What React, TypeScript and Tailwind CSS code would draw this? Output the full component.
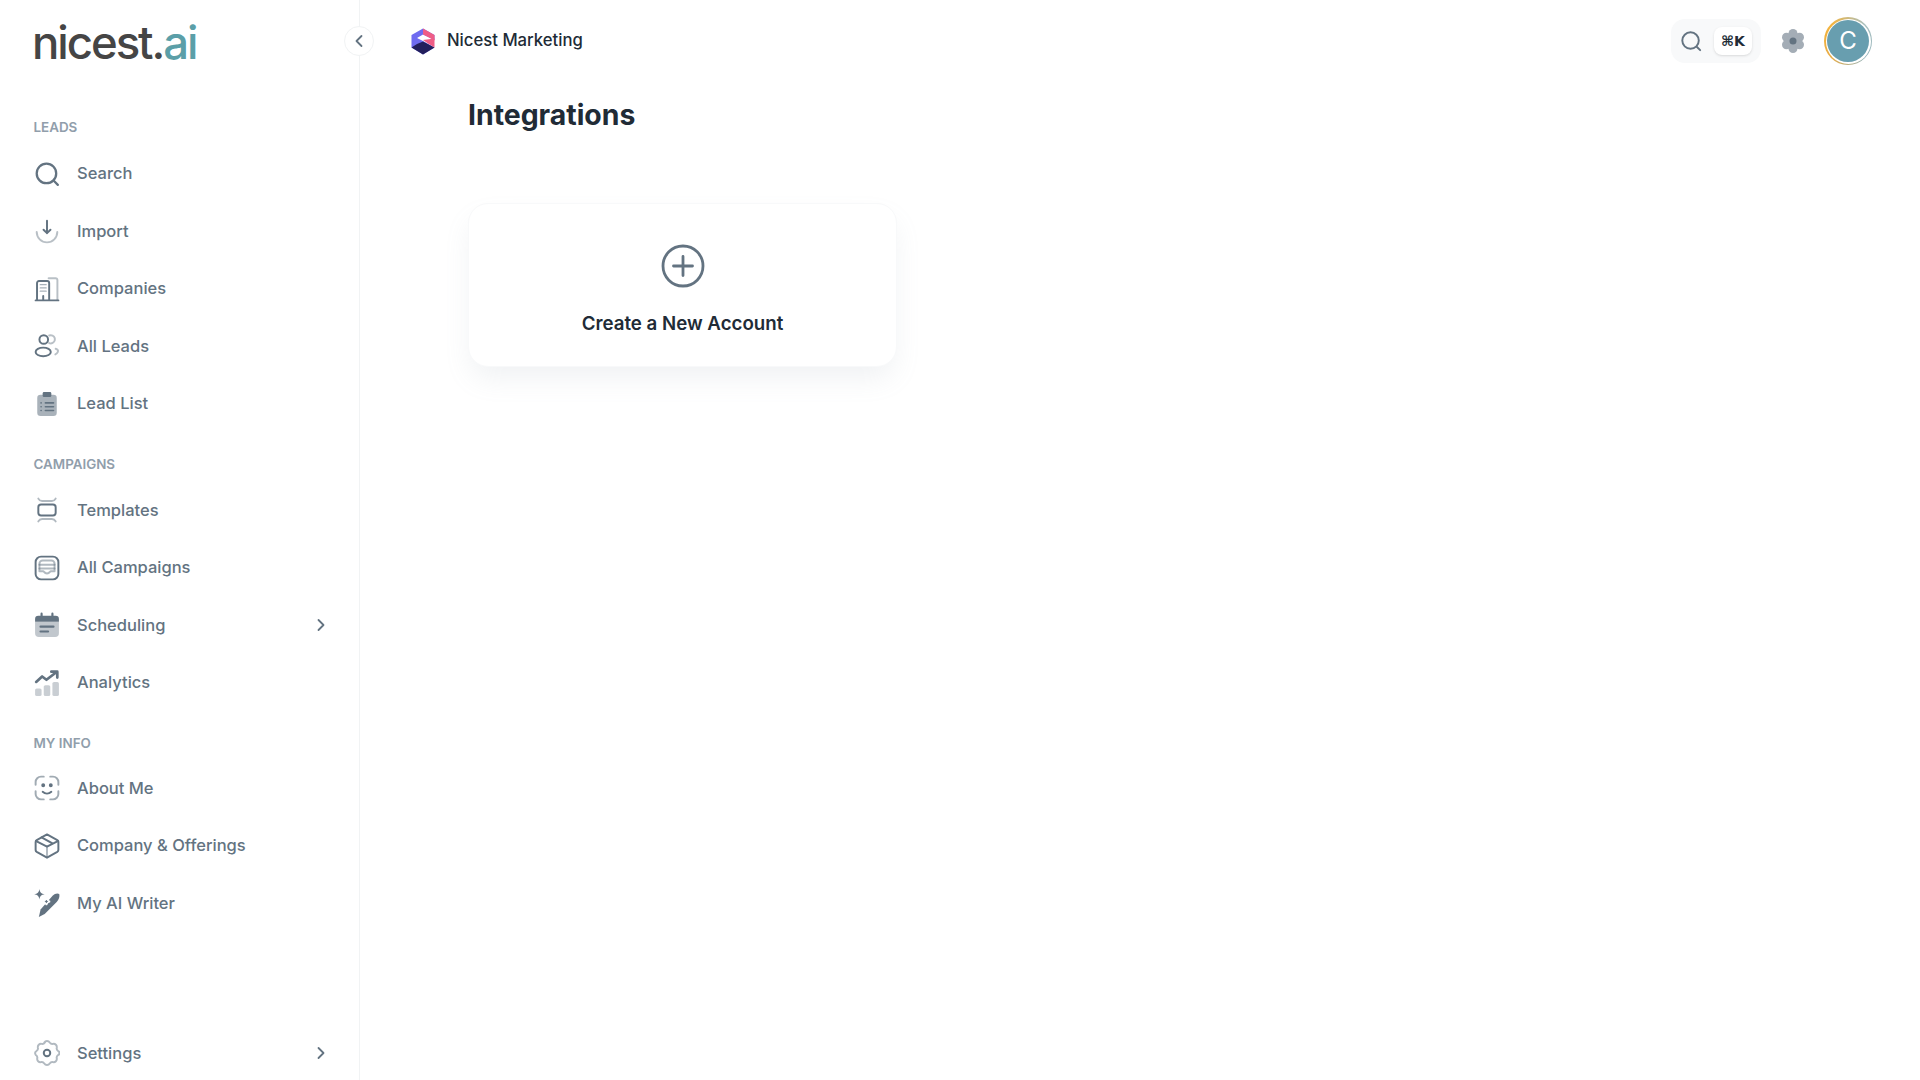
import { ReactNode } from "react";

const c = "#637381";

function Ico({ children, size = 26 }: { children: ReactNode; size?: number }) {
  return (
    <svg width={size} height={size} viewBox="0 0 24 24" fill="none" stroke={c} strokeWidth="1.800" strokeLinecap="round" strokeLinejoin="round" className="shrink-0">
      {children}
    </svg>
  );
}

const SearchIcon = ({ size = 26 }: { size?: number }) => (
  <Ico size={size}>
    <circle cx="11.500" cy="11.500" r="9" strokeWidth="2.100" />
    <path d="M18.500 18.500 22 22" strokeWidth="2.100" />
  </Ico>
);
const ImportIcon = () => (
  <Ico>
    <path d="M12 2.500v11.500m0 0 3.200-3.200M12 14l-3.200-3.200" />
    <path d="M2.500 13a9.500 9.500 0 0 0 19 0" opacity=".45" />
  </Ico>
);
const CompaniesIcon = () => (
  <Ico>
    <path d="M1.500 22.500h21" />
    <path d="M2.800 22V6.500A1.800 1.800 0 0 1 4.600 4.700h7.600a1.800 1.800 0 0 1 1.800 1.800V22" />
    <path d="M13.500 2h6.300a1.800 1.800 0 0 1 1.800 1.800V22" opacity=".45" />
    <path d="M5.800 8h5.400M5.800 11h5.400M5.800 14h5.400" opacity=".55" strokeWidth="1.300" />
    <path d="M8.500 22v-3.500" />
  </Ico>
);
const LeadsIcon = () => (
  <Ico>
    <circle cx="9" cy="6" r="4" />
    <ellipse cx="8.500" cy="17.500" rx="7" ry="4" />
    <path d="M14 2.300a3.800 3.800 0 0 1 1.500-.300 3.800 3.800 0 1 1-1.500 7.300" opacity=".45" />
    <path d="M20 14.500c2 .6 2.500 1.800 2 3s-1 1.800-2.300 2.300" opacity=".45" />
  </Ico>
);
const ListIcon = () => (
  <Ico>
    <rect x="3" y="3.500" width="18" height="19.500" rx="3" fill={c} fillOpacity=".55" stroke="none" />
    <rect x="8" y="1" width="8" height="4.500" rx="1.200" fill={c} stroke="none" />
    <path d="M10.500 11H18M10.500 14.500H18M10.500 18H18M6.500 11h.1M6.500 14.500h.1M6.500 18h.1" strokeWidth="1.500" />
  </Ico>
);
const TemplatesIcon = () => (
  <Ico>
    <rect x="4" y="7" width="16" height="10" rx="2.500" />
    <path d="M4 1.500c.8 1.500 2 2.200 3.500 2.200h9c1.500 0 2.700-.7 3.500-2.200" opacity=".5" />
    <path d="M4 22.500c.8-1.500 2-2.200 3.500-2.200h9c1.500 0 2.700.7 3.500 2.200" opacity=".5" />
  </Ico>
);
const CampaignsIcon = () => (
  <Ico>
    <rect x="1.500" y="1.500" width="21" height="21" rx="5" />
    <path d="M5 15V8a3 3 0 0 1 3-3h8a3 3 0 0 1 3 3v7h-3.500c-.8 0-1 2-3.500 2s-2.700-2-3.500-2H5Z" opacity=".5" />
    <path d="M5 9h14M5 12.500h14" opacity=".5" />
  </Ico>
);
const SchedulingIcon = () => (
  <svg width="26" height="26" viewBox="0 0 24 24" className="shrink-0">
    <path d="M1 9h22v10.500a3.500 3.500 0 0 1-3.500 3.500h-15A3.500 3.500 0 0 1 1 19.500V9Z" fill={c} opacity=".4" />
    <path d="M1 9V6.500A3 3 0 0 1 4 3.500h2V1.500a1 1 0 0 1 2 0v2h8v-2a1 1 0 0 1 2 0v2h2a3 3 0 0 1 3 3V9H1Z" fill={c} />
    <path d="M6 13.500h12M6 18h7" stroke={c} strokeWidth="2" strokeLinecap="round" />
  </svg>
);
const AnalyticsIcon = () => (
  <svg width="26" height="26" viewBox="0 0 24 24" className="shrink-0">
    <rect x="1" y="17" width="6" height="7" rx="1.500" fill={c} opacity=".35" />
    <rect x="9" y="14" width="6" height="10" rx="1.500" fill={c} opacity=".35" />
    <rect x="17" y="11" width="6" height="13" rx="1.500" fill={c} opacity=".35" />
    <path d="m2 11 5.500-5 4 3L20 2.500" fill="none" stroke={c} strokeWidth="2.500" strokeLinecap="round" strokeLinejoin="round" />
    <path d="M16 1.500h5.500V7" fill="none" stroke={c} strokeWidth="2.500" strokeLinecap="round" strokeLinejoin="round" />
  </svg>
);
const FaceIcon = () => (
  <Ico>
    <path d="M9 1.500H6.500a5 5 0 0 0-5 5V9M15 1.500h2.500a5 5 0 0 1 5 5V9M1.500 15v2.500a5 5 0 0 0 5 5H9M22.500 15v2.500a5 5 0 0 1-5 5H15" opacity=".6" />
    <path d="M8 15.500c2.300 2 5.700 2 8 0" />
    <circle cx="8.500" cy="9.500" r=".9" fill={c} />
    <circle cx="15.500" cy="9.500" r=".9" fill={c} />
  </Ico>
);
const BoxIcon = () => (
  <Ico>
    <path d="M12 1.300 21.500 6.500a2 2 0 0 1 1 1.700v7.600a2 2 0 0 1-1 1.700L12 22.700 2.500 17.500a2 2 0 0 1-1-1.700V8.200a2 2 0 0 1 1-1.700L12 1.300Z" />
    <path d="m2 7.500 10 5 10-5M7 4l10 5.500" />
    <path d="M12 12.500v10" opacity=".5" />
  </Ico>
);
const WriterIcon = () => (
  <svg width="28" height="28" viewBox="0 0 24 24" className="shrink-0">
    <path d="M5.500 0c.5 3 1.500 4 4.500 4.500C7 5 6 6 5.500 9 5 6 4 5 1 4.500 4 4 5 3 5.500 0Z" fill={c} />
    <path d="M5 24l1.500-6.500L17 5.500c1.500-1.500 4-2.200 5.500-1.200.6 2-.4 5-2 6.700L10 21.500 5 24Z" fill={c} />
    <path d="M11.500 7.500c.4 2 1.200 2.800 3.200 3.200-2 .4-2.800 1.200-3.200 3.200-.4-2-1.200-2.800-3.200-3.200 2-.4 2.800-1.200 3.200-3.200Z" fill={c} stroke="#fff" strokeWidth="1.200" />
  </svg>
);
const GearIcon = () => (
  <Ico>
    <circle cx="12" cy="12" r="3" />
    <path opacity=".5" d="M9.500 2.300c.6-.9 1.500-1.300 2.500-1.300s1.900.4 2.500 1.300c.7 1 1.800 1.600 3 1.300 1-.2 2 .1 2.700.8s1 1.700.8 2.700c-.3 1.200.3 2.300 1.300 3 .9.600 1.300 1 1.300 1.900s-.4 1.300-1.300 1.900c-1 .7-1.600 1.800-1.300 3 .2 1-.1 2-.8 2.700s-1.700 1-2.700.8c-1.200-.3-2.300.3-3 1.300-.6.900-1.500 1.300-2.500 1.300s-1.900-.4-2.500-1.300c-.7-1-1.800-1.600-3-1.300-1 .2-2-.1-2.700-.8s-1-1.700-.8-2.700c.3-1.200-.3-2.300-1.300-3C1.400 13.300 1 12.900 1 12s.4-1.300 1.300-1.900c1-.7 1.600-1.800 1.300-3-.2-1 .1-2 .8-2.700s1.700-1 2.700-.8c1.200.3 2.300-.3 3-1.300Z" />
  </Ico>
);

const Chevron = ({ left = false }: { left?: boolean }) => (
  <svg width="10" height="14" viewBox="0 0 10 14" fill="none" stroke={c} strokeWidth="1.800" strokeLinecap="round" strokeLinejoin="round">
    <path d={left ? "M7.500 2 2.500 7l5 5" : "M2.500 2l5 5-5 5"} />
  </svg>
);

function Label({ children }: { children: ReactNode }) {
  return <div className="ml-[0.500px] text-[13.400px] leading-[18px] font-semibold text-[#919eab] uppercase">{children}</div>;
}

function Item({ icon, label, more }: { icon: ReactNode; label: string; more?: boolean }) {
  return (
    <div className="h-[57.500px] flex items-center text-[16.500px] font-[450] text-[#637381]">
      <div className="w-[26px] h-[26px] flex items-center justify-center mr-[17px] ml-[1px]">{icon}</div>
      <span className="flex-1">{label}</span>
      {more && <Chevron />}
    </div>
  );
}

export default function App() {
  return (
    <div className="relative h-[1080px] w-[1920px] overflow-hidden flex bg-white font-['Inter',sans-serif]">
      <aside className="w-[360px] shrink-0 border-r border-[#f1f3f4] pl-[33px] pr-[33px] flex flex-col">
        <div className="h-[118px] pt-[11px]">
          <div className="ml-[-1px] text-[45.500px] leading-[64px] font-medium tracking-[-0.045em] text-[#454545]">
            nicest.<span className="text-[#5b9fa8]">ai</span>
          </div>
        </div>
        <Label>LEADS</Label>
        <div className="mt-[9px]">
          <Item icon={<SearchIcon />} label="Search" />
          <Item icon={<ImportIcon />} label="Import" />
          <Item icon={<CompaniesIcon />} label="Companies" />
          <Item icon={<LeadsIcon />} label="All Leads" />
          <Item icon={<ListIcon />} label="Lead List" />
        </div>
        <div className="mt-[22px]">
          <Label>CAMPAIGNS</Label>
        </div>
        <div className="mt-[9px]">
          <Item icon={<TemplatesIcon />} label="Templates" />
          <Item icon={<CampaignsIcon />} label="All Campaigns" />
          <Item icon={<SchedulingIcon />} label="Scheduling" more />
          <Item icon={<AnalyticsIcon />} label="Analytics" />
        </div>
        <div className="mt-[22px]">
          <Label>MY INFO</Label>
        </div>
        <div className="mt-[8px]">
          <Item icon={<FaceIcon />} label="About Me" />
          <Item icon={<BoxIcon />} label="Company & Offerings" />
          <Item icon={<WriterIcon />} label="My AI Writer" />
        </div>
        <div className="mt-auto mb-[-2px]">
          <Item icon={<GearIcon />} label="Settings" more />
        </div>
      </aside>

      <div className="absolute left-[344px] top-[26px] w-[30px] h-[30px] rounded-full bg-white border border-[#f1f3f4] flex items-center justify-center">
        <Chevron left />
      </div>

      <main className="flex-1 flex flex-col">
        <header className="h-[82px] pl-[51px] pr-[48px] flex items-center justify-between">
          <div className="flex items-center gap-[12px]">
            <svg width="24" height="27" viewBox="0 0 24 27">
              <path d="M12 .5 23.500 7v5L12 6.500 6 10l6 3 11.500 6.500L12 26.500.5 19.500V7Z" fill="#6f6bf0" />
              <path d="M12 .5 23.500 7v5.500L17 9l-5-2.500V.5Z" fill="#ef5d86" />
              <path d="M12 13.500l11.500 6L12 26.500.5 19.500 6 16l6-2.500Z" fill="#231f5c" />
              <path d="m12 12 11.500-1.500v9L17 15.500Z" fill="#ef5d86" />
            </svg>
            <span className="text-[16.700px] font-medium text-[#212b36]">Nicest Marketing</span>
          </div>
          <div className="flex items-center">
            <div className="w-[90px] h-[44px] rounded-[14px] bg-[#f8f9fa] flex items-center pl-[9px] pr-[9px] justify-between">
              <SearchIcon size={22} />
              <div className="w-[38px] h-[28px] rounded-[8px] bg-white shadow-sm flex items-center justify-center text-[14px] font-bold text-[#212b36] font-['DejaVu_Sans',sans-serif]">⌘K</div>
            </div>
            <svg width="26" height="26" viewBox="0 0 26 26" className="ml-[19px]">
              <g fill="#a4adb6">
                <circle cx="13" cy="13" r="8.500" />
                <circle cx="13" cy="5.500" r="4.500" />
                <circle cx="13" cy="20.500" r="4.500" />
                <circle cx="6.500" cy="9.200" r="4.500" />
                <circle cx="19.500" cy="9.200" r="4.500" />
                <circle cx="6.500" cy="16.800" r="4.500" />
                <circle cx="19.500" cy="16.800" r="4.500" />
              </g>
              <circle cx="13" cy="13" r="3.500" fill="#637381" />
            </svg>
            <div className="ml-[18px] w-[48px] h-[48px] rounded-full bg-[conic-gradient(from_45deg,#a9c0c0,#8fb0b8,#e9ac45,#f2b33d,#a9c0c0)] p-[1.500px]">
              <div className="w-full h-full rounded-full bg-white p-[1.500px]">
                <div className="w-full h-full rounded-full bg-[#689eaf] flex items-center justify-center text-white text-[24px]">C</div>
              </div>
            </div>
          </div>
        </header>

        <div className="pl-[108px]">
          <h1 className="text-[28.400px] leading-[66px] font-bold text-[#212b36]">Integrations</h1>
          <div className="mt-[55px] w-[429px] h-[164px] rounded-[20px] bg-white border border-[#f8f9fa] shadow-[0_14px_28px_-4px_rgba(145,158,171,0.14)] flex flex-col items-center pt-[40px]">
            <svg width="44" height="44" viewBox="0 0 44 44" fill="none" stroke="#637381" strokeWidth="2.800" strokeLinecap="round">
              <circle cx="22" cy="22" r="20" />
              <path d="M22 12.500v19M12.500 22h19" />
            </svg>
            <div className="mt-[24px] text-[18.700px] leading-[24px] font-semibold text-[#212b36]">Create a New Account</div>
          </div>
        </div>
      </main>
    </div>
  );
}
